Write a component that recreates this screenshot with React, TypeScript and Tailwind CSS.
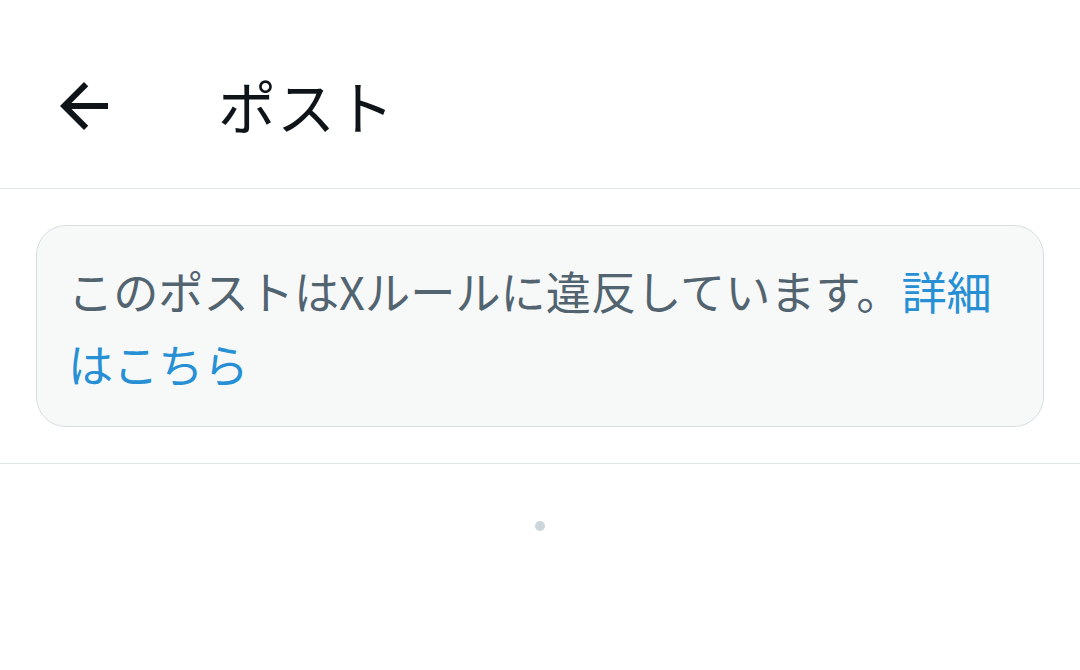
import React from "react";

export default function App() {
  return (
    <div
      className="w-[1080px] h-[670px] bg-white overflow-hidden"
      style={{ fontFamily: '"Noto Sans CJK JP", "Noto Sans", sans-serif' }}
    >
      <div className="h-[189px] pt-[24px] flex items-center border-b border-[#e1e6e9]">
        <div className="ml-[48px] w-[72px] h-[72px] flex items-center justify-center">
          <svg viewBox="0 0 24 24" width="72" height="72" fill="#0f1419">
            <path d="M20 11H7.83l5.59-5.59L12 4l-8 8 8 8 1.41-1.41L7.83 13H20v-2z" />
          </svg>
        </div>
        <div className="ml-[98px] text-[58px] leading-none text-[#0f1419] font-normal tracking-[1px] -mt-[2px]">
          ポスト
        </div>
      </div>
      <div className="px-[36px] py-[36px] border-b border-[#e1e6e9]">
        <div className="rounded-[30px] border border-[#d6dde1] bg-[#f7f9f9] pl-[31px] pr-[30px] pt-[28px] pb-[25px] h-[202px]">
          <p className="text-[45.2px] leading-[73px] text-[#536471]">
            このポストはXルールに違反しています。
            <span className="text-[#2790d5]">詳細はこちら</span>
          </p>
        </div>
      </div>
      <div className="flex justify-center pt-[57px]">
        <div className="w-[10px] h-[10px] rounded-full bg-[#cbd5dc]" />
      </div>
    </div>
  );
}
